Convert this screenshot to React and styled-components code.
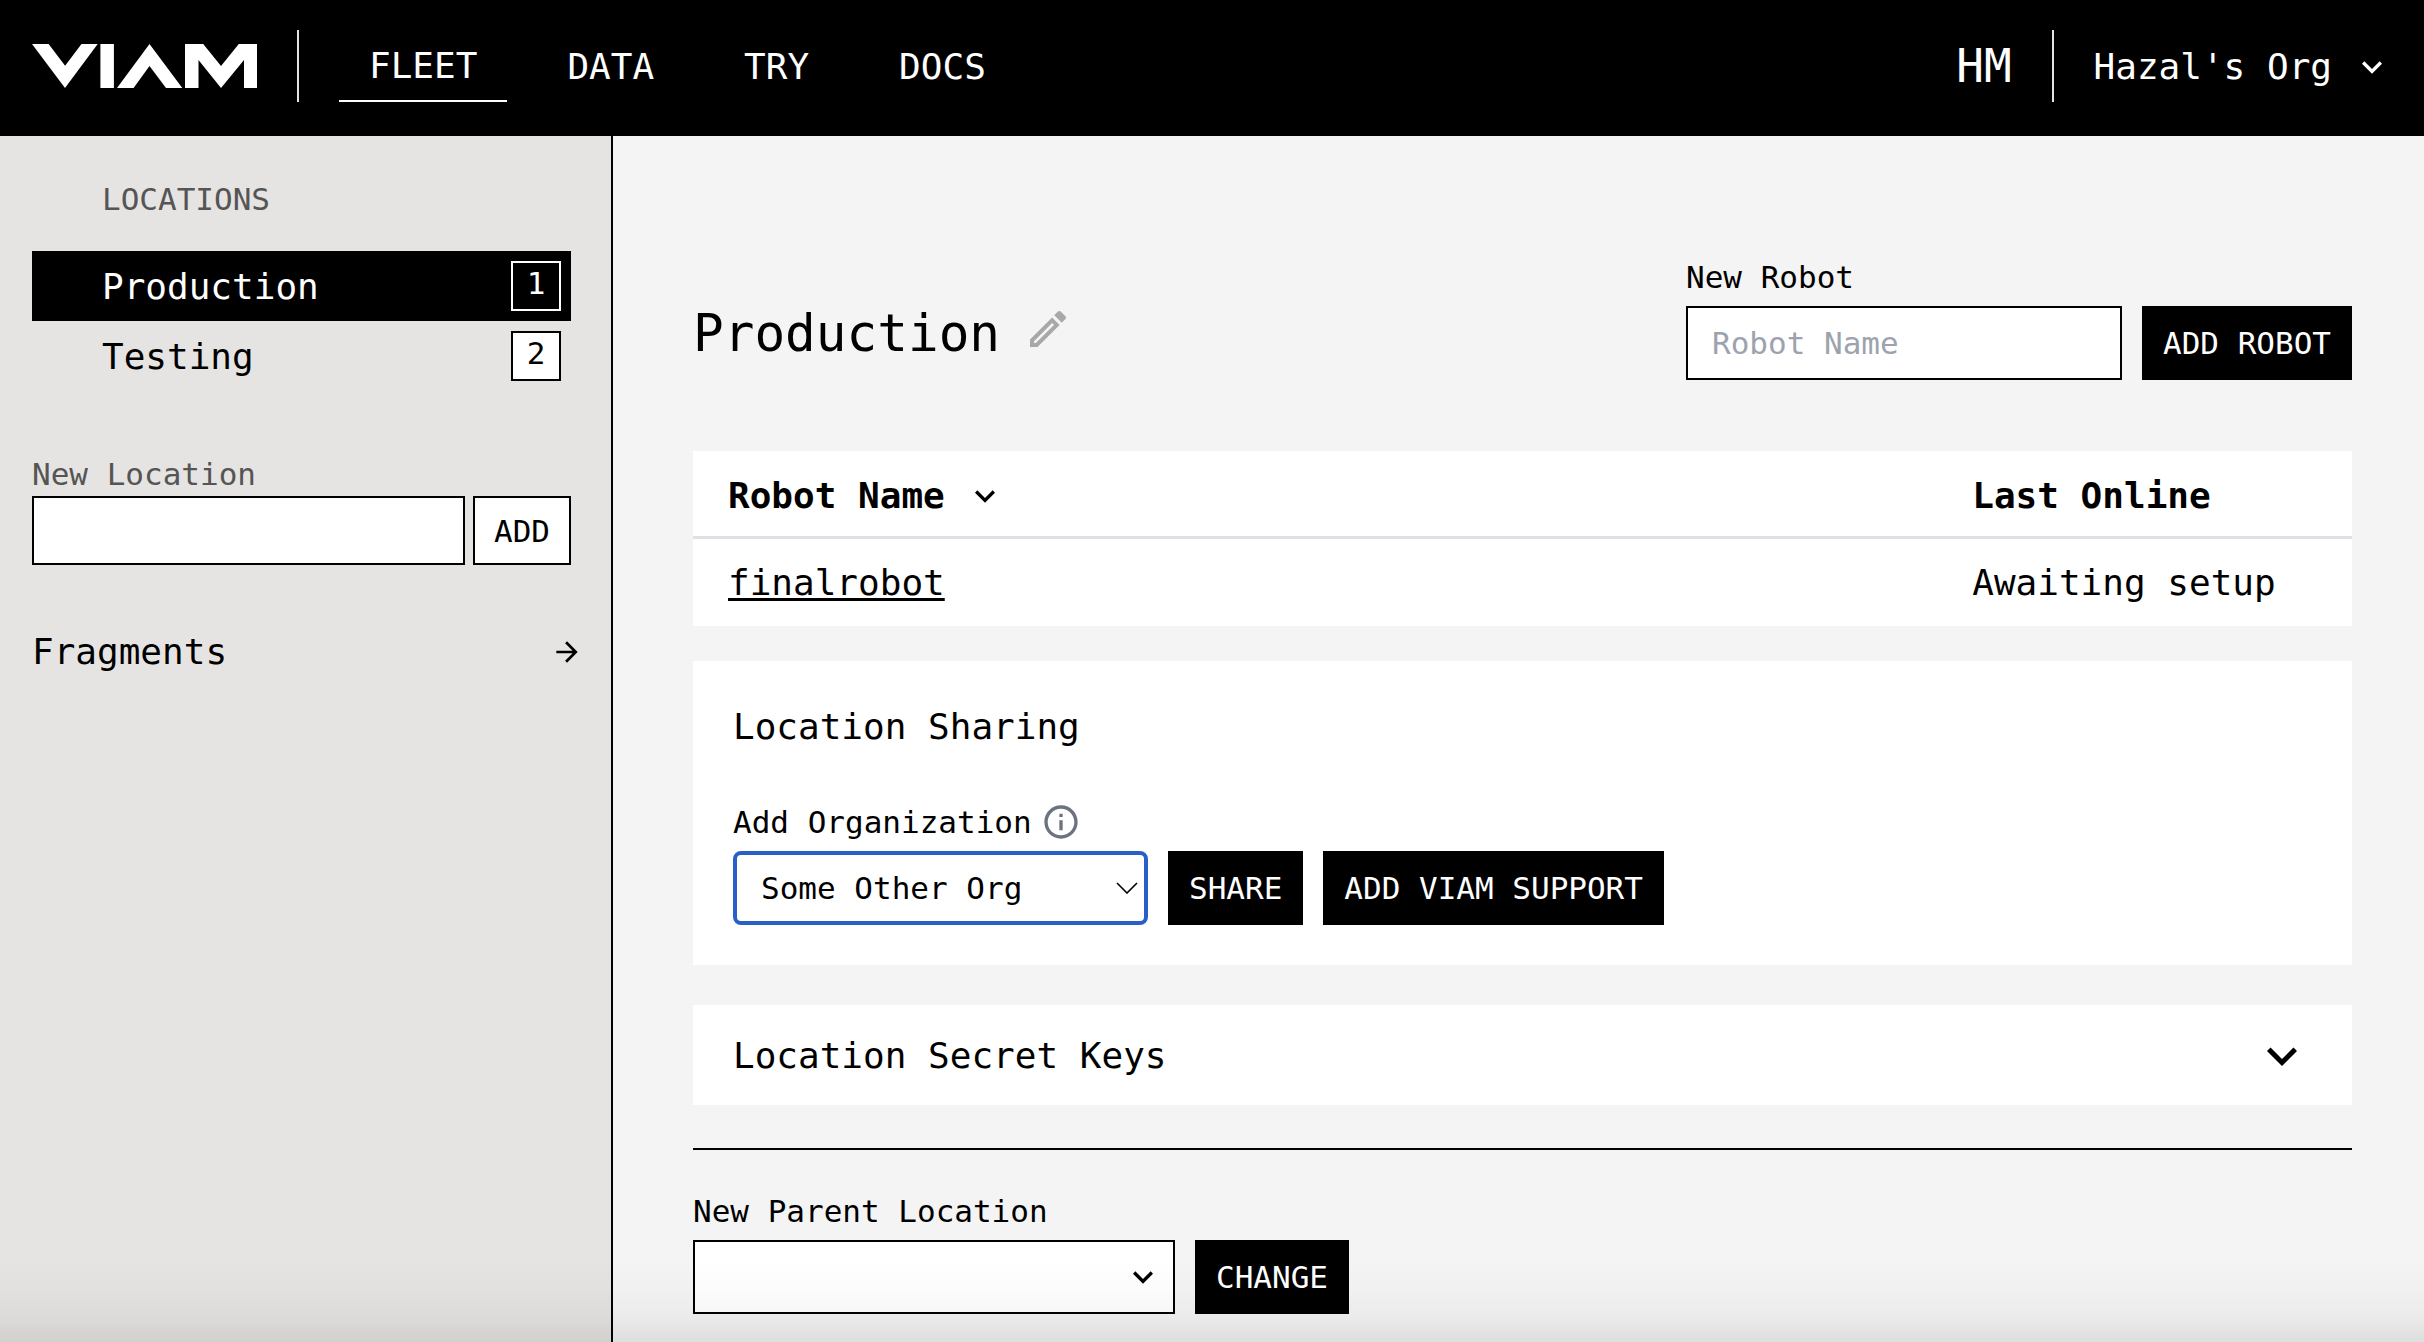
import React, { useState } from "react";
import styled, { createGlobalStyle } from "styled-components";

const mono = '"DejaVu Sans Mono", "Liberation Mono", monospace';

const GlobalStyle = createGlobalStyle`
  *, *::before, *::after { box-sizing: border-box; }
  body {
    margin: 0;
    background: #f4f4f4;
    color: #000;
    font-family: ${mono};
    font-size: 36px;
    line-height: 48px;
  }
  button, input, select { font: inherit; color: inherit; margin: 0; border-radius: 0; }
  h1, h2, p, ul { margin: 0; padding: 0; font-weight: 400; }
  svg { display: block; flex: none; }
`;

/* ---------- shell ---------- */

const Page = styled.div`
  display: flex;
  flex-direction: column;
  min-height: 100vh;
`;

const Header = styled.header`
  display: flex;
  align-items: center;
  gap: 40px;
  padding: 30px 32px 34px;
  background: #000;
  color: #fff;
`;

const Divider = styled.span`
  width: 2px;
  height: 72px;
  background: #e5e4e2;
`;

const Nav = styled.nav`
  display: flex;
  gap: 30px;
  margin-right: auto;
`;

const NavLink = styled.a`
  height: 72px;
  padding: 2px 30px 0;
  line-height: ${(p) => (p.$active ? "68px" : "70px")};
  border-bottom: ${(p) => (p.$active ? "2px solid #fff" : "none")};
  color: inherit;
  text-decoration: none;
`;

const Initials = styled.span`
  font-size: 46px;
`;

const PlainButton = styled.button`
  display: flex;
  align-items: center;
  gap: 20px;
  padding: 0;
  border: 0;
  background: none;
  font-weight: inherit;
  cursor: pointer;
`;

const OrgButton = styled(PlainButton)`
  padding-top: 2px;
`;

const Body = styled.div`
  display: flex;
  flex: 1;
`;

/* ---------- sidebar ---------- */

const Sidebar = styled.aside`
  flex: 0 0 613px;
  min-width: 0;
  padding: 43px 28px 43px 32px;
  background: #e5e4e2;
  border-right: 2px solid #000;
`;

const SidebarHeading = styled.h2`
  padding-left: 70px;
  margin-bottom: 32px;
  font-size: 31px;
  line-height: 40px;
  color: #555;
`;

const LocationList = styled.ul`
  list-style: none;
  margin-right: 12px;
`;

const LocationLink = styled.a`
  display: flex;
  align-items: center;
  justify-content: space-between;
  height: 70px;
  padding: 0 10px 0 70px;
  background: ${(p) => (p.$active ? "#000" : "transparent")};
  color: ${(p) => (p.$active ? "#fff" : "#000")};
  text-decoration: none;
`;

const LocationName = styled.span`
  padding-top: 2px;
`;

const Count = styled.span`
  width: 50px;
  height: 50px;
  border: 2px solid ${(p) => (p.$active ? "#fff" : "#000")};
  background: ${(p) => (p.$active ? "#000" : "#fff")};
  font-size: 31px;
  line-height: 40px;
  text-align: center;
`;

const NewLocationForm = styled.form`
  margin: 63px 12px 63px 0;
`;

const Label = styled.label`
  display: block;
  font-size: 31px;
  line-height: 40px;
  color: ${(p) => (p.$muted ? "#555" : "#000")};
`;

const LocationFields = styled.div`
  display: flex;
  gap: 8px;
  height: 69px;
  margin-top: 2px;
`;

const TextInput = styled.input`
  flex: 1 1 auto;
  min-width: 0;
  padding: 0 24px;
  border: 2px solid #000;
  background: #fff;
  font-size: 31px;
  outline: none;
  &::placeholder { color: #9ca3af; opacity: 1; }
`;

const Button = styled.button`
  flex: none;
  padding: 0 ${(p) => (p.$outlined ? "19px" : "21px")};
  border: ${(p) => (p.$outlined ? "2px solid #000" : "0")};
  background: ${(p) => (p.$outlined ? "#fff" : "#000")};
  color: ${(p) => (p.$outlined ? "#000" : "#fff")};
  font-size: 31px;
  line-height: 40px;
  white-space: nowrap;
  cursor: pointer;
`;

const FragmentsLink = styled.a`
  display: flex;
  align-items: center;
  justify-content: space-between;
  color: inherit;
  text-decoration: none;
`;

/* ---------- main column ---------- */

const Main = styled.main`
  flex: 1;
  min-width: 0;
  padding: 121px 72px 28px 80px;
`;

const TitleRow = styled.div`
  display: flex;
  align-items: flex-end;
  justify-content: space-between;
  margin-bottom: 71px;
`;

const TitleGroup = styled.div`
  display: flex;
  align-items: center;
  gap: 24px;
  height: 92px;
`;

const Title = styled.h1`
  font-size: 51px;
  line-height: 64px;
`;

const EditButton = styled(PlainButton)`
  padding-bottom: 10px;
  color: #a8a8a8;
`;

const Field = styled.div`
  display: flex;
  flex-direction: column;
  gap: 9px;
`;

const LabelRow = styled.div`
  display: flex;
  align-items: center;
  gap: 9px;
  color: #6b7280;
`;

const Controls = styled.div`
  display: flex;
  gap: 20px;
  height: 74px;
`;

const RobotInput = styled(TextInput)`
  flex: 0 1 436px;
`;

const SelectBox = styled.div`
  position: relative;
  width: ${(p) => p.$width};
`;

const Select = styled.select`
  width: 100%;
  height: 100%;
  padding: 0 60px 0 24px;
  appearance: none;
  border: ${(p) => (p.$focused ? "4px solid #2860c8" : "2px solid #000")};
  border-radius: ${(p) => (p.$focused ? "8px" : "0")};
  background: #fff;
  font-size: 31px;
  outline: none;
`;

const SelectArrow = styled.span`
  position: absolute;
  top: 0;
  bottom: 0;
  right: ${(p) => p.$inset};
  display: flex;
  align-items: center;
  pointer-events: none;
`;

const RobotTable = styled.table`
  width: 100%;
  table-layout: fixed;
  border-collapse: separate;
  border-spacing: 0;
  background: #fff;
  text-align: left;
`;

const HeadCell = styled.th`
  width: ${(p) => p.$width};
  padding: 21px 35px 16px;
  border-bottom: 3px solid #dee2e6;
  font-weight: 700;
`;

const Cell = styled.td`
  padding: 20px 35px 19px;
`;

const RobotLink = styled.a`
  color: inherit;
  text-decoration-thickness: 3px;
  text-underline-offset: 3px;
  text-decoration-skip-ink: none;
`;

const SharingCard = styled.section`
  margin: 35px 0 40px;
  padding: 42px 40px 40px;
  background: #fff;
`;

const CardTitle = styled.h2`
  margin-bottom: 51px;
  font-size: 36px;
`;

const KeysToggle = styled(PlainButton)`
  width: 100%;
  height: 100px;
  padding: 2px 40px 0;
  justify-content: space-between;
  background: #fff;
`;

const Rule = styled.hr`
  height: 2px;
  margin: 43px 0 41px;
  border: 0;
  background: #000;
`;

const BottomFade = styled.div`
  position: fixed;
  left: 0;
  right: 0;
  bottom: 0;
  height: 84px;
  pointer-events: none;
  background: linear-gradient(
    rgba(0, 0, 0, 0),
    rgba(0, 0, 0, 0.01) 35%,
    rgba(0, 0, 0, 0.03) 66%,
    rgba(0, 0, 0, 0.086)
  );
`;

/* ---------- drawings ---------- */

const Icon = ({ size, d }) => (
  <svg width={size} height={size} viewBox="0 0 24 24" fill="currentColor" aria-hidden="true">
    <path d={d} />
  </svg>
);

const Chevron = ({ size = 40 }) => (
  <Icon size={size} d="M16.59 8.59 12 13.17 7.41 8.59 6 10l6 6 6-6z" />
);

const Pencil = () => (
  <Icon
    size={48}
    d="M14.06 9l.94.94L5.92 19H5v-.92L14.06 9M17.66 3c-.25 0-.51.1-.7.29l-1.83 1.83 3.75 3.75 1.83-1.83c.39-.39.39-1.04 0-1.41l-2.34-2.34c-.2-.2-.45-.29-.71-.29m-3.6 3.19L3 17.25V21h3.75L17.81 9.94l-3.75-3.75z"
  />
);

const ArrowRight = () => (
  <Icon size={32} d="M12 4l-1.41 1.41L16.17 11H4v2h12.17l-5.58 5.59L12 20l8-8z" />
);

const Info = () => (
  <Icon
    size={40}
    d="M11 7h2v2h-2zm0 4h2v6h-2zm1-9C6.48 2 2 6.48 2 12s4.48 10 10 10 10-4.48 10-10S17.52 2 12 2zm0 18c-4.41 0-8-3.59-8-8s3.59-8 8-8 8 3.59 8 8-3.59 8-8 8z"
  />
);

const ThinChevron = () => (
  <svg width="22" height="12" viewBox="0 0 22 12" fill="none" stroke="currentColor" strokeWidth="1.6" aria-hidden="true">
    <path d="M1 1l10 10L21 1" />
  </svg>
);

const Logo = () => (
  <svg width="225" height="44" viewBox="0 0 225 44" fill="currentColor" role="img" aria-label="Viam">
    <path d="M0 0h16.6l16.5 21.7L49.5 0h16.2L33 44z" />
    <path d="M68.4 0h13.5v44H68.4z" />
    <path d="M117.5 0l32.8 44H134l-16.5-22-15.9 22H85z" />
    <path d="M153 44V0h18.2L189 22l17.8-22H225v44h-13V16l-23 28-22.5-28v28z" />
  </svg>
);

/* ---------- page ---------- */

const navItems = ["FLEET", "DATA", "TRY", "DOCS"];
const locations = [
  { name: "Production", robots: 1 },
  { name: "Testing", robots: 2 },
];

export default function App() {
  const [keysOpen, setKeysOpen] = useState(false);
  const stop = (e) => e.preventDefault();

  return (
    <Page>
      <GlobalStyle />
      <Header>
        <Logo />
        <Divider />
        <Nav>
          {navItems.map((item, i) => (
            <NavLink key={item} href="#" $active={i === 0}>
              {item}
            </NavLink>
          ))}
        </Nav>
        <Initials>HM</Initials>
        <Divider />
        <OrgButton type="button">
          Hazal's Org
          <Chevron />
        </OrgButton>
      </Header>

      <Body>
        <Sidebar>
          <SidebarHeading>LOCATIONS</SidebarHeading>
          <LocationList>
            {locations.map((loc, i) => (
              <li key={loc.name}>
                <LocationLink href="#" $active={i === 0}>
                  <LocationName>{loc.name}</LocationName>
                  <Count $active={i === 0}>{loc.robots}</Count>
                </LocationLink>
              </li>
            ))}
          </LocationList>
          <NewLocationForm onSubmit={stop}>
            <Label htmlFor="new-location" $muted>
              New Location
            </Label>
            <LocationFields>
              <TextInput id="new-location" type="text" />
              <Button $outlined>ADD</Button>
            </LocationFields>
          </NewLocationForm>
          <FragmentsLink href="#">
            Fragments
            <ArrowRight />
          </FragmentsLink>
        </Sidebar>

        <Main>
          <TitleRow>
            <TitleGroup>
              <Title>Production</Title>
              <EditButton type="button" aria-label="Rename location">
                <Pencil />
              </EditButton>
            </TitleGroup>
            <Field as="form" onSubmit={stop}>
              <Label htmlFor="new-robot">New Robot</Label>
              <Controls>
                <RobotInput id="new-robot" type="text" placeholder="Robot Name" />
                <Button>ADD ROBOT</Button>
              </Controls>
            </Field>
          </TitleRow>

          <RobotTable>
            <thead>
              <tr>
                <HeadCell $width="75%" scope="col">
                  <PlainButton type="button">
                    Robot Name
                    <Chevron />
                  </PlainButton>
                </HeadCell>
                <HeadCell $width="25%" scope="col">Last Online</HeadCell>
              </tr>
            </thead>
            <tbody>
              <tr>
                <Cell>
                  <RobotLink href="#">finalrobot</RobotLink>
                </Cell>
                <Cell>Awaiting setup</Cell>
              </tr>
            </tbody>
          </RobotTable>

          <SharingCard>
            <CardTitle>Location Sharing</CardTitle>
            <Field>
              <LabelRow>
                <Label htmlFor="organization">Add Organization</Label>
                <Info />
              </LabelRow>
              <Controls>
                <SelectBox $width="415px">
                  <Select id="organization" $focused defaultValue="other">
                    <option value="other">Some Other Org</option>
                  </Select>
                  <SelectArrow $inset="10px">
                    <ThinChevron />
                  </SelectArrow>
                </SelectBox>
                <Button type="button">SHARE</Button>
                <Button type="button">ADD VIAM SUPPORT</Button>
              </Controls>
            </Field>
          </SharingCard>

          <KeysToggle type="button" aria-expanded={keysOpen} onClick={() => setKeysOpen(!keysOpen)}>
            Location Secret Keys
            <Chevron size={60} />
          </KeysToggle>

          <Rule />

          <Field as="form" onSubmit={stop}>
            <Label htmlFor="parent-location">New Parent Location</Label>
            <Controls>
              <SelectBox $width="482px">
                <Select id="parent-location" defaultValue="">
                  <option value="" aria-label="No parent" />
                </Select>
                <SelectArrow $inset="12px">
                  <Chevron />
                </SelectArrow>
              </SelectBox>
              <Button>CHANGE</Button>
            </Controls>
          </Field>
        </Main>
      </Body>
      <BottomFade />
    </Page>
  );
}
